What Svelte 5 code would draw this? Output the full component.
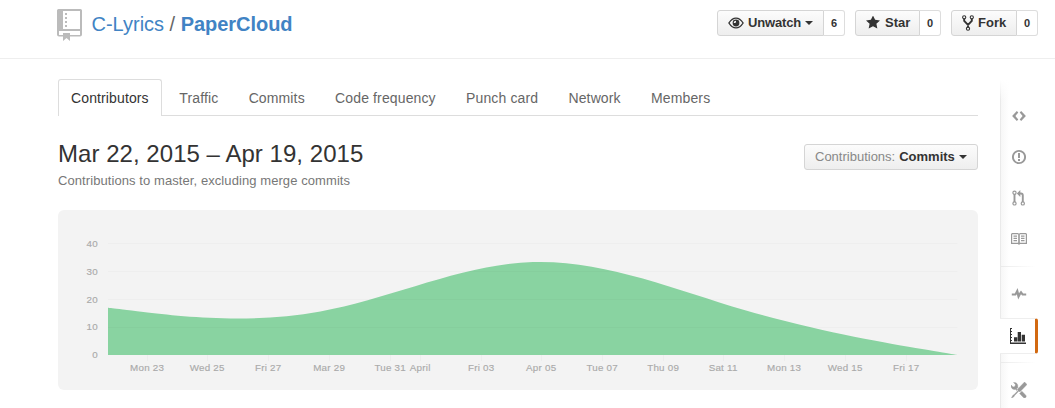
<script>
  const tabs = ['Contributors', 'Traffic', 'Commits', 'Code frequency', 'Punch card', 'Network', 'Members'];

  const weeks = [17, 8, 45, 13, 0];
  const left = 50, right = 899.5, base = 145, unit = 2.775;
  const pts = weeks.map((v, i) => [left + ((right - left) * i) / (weeks.length - 1), base - v * unit]);

  // Area outline as a uniform cubic B-spline with clamped ends
  function basis(p) {
    const mix = (a, b, wa, wb, d) => [(a[0] * wa + b[0] * wb) / d, (a[1] * wa + b[1] * wb) / d];
    const q = [p[0], p[0], ...p, p[p.length - 1], p[p.length - 1]];
    let d = `M${p[0]}`;
    for (let i = 1; i < q.length - 2; i++) {
      const c1 = mix(q[i], q[i + 1], 2, 1, 3);
      const c2 = mix(q[i], q[i + 1], 1, 2, 3);
      const e = [0, 1].map((k) => (q[i][k] + 4 * q[i + 1][k] + q[i + 2][k]) / 6);
      d += `C${c1} ${c2} ${e}`;
    }
    return `${d}L${p[p.length - 1]}L${right},${base}L${left},${base}Z`;
  }
  const area = basis(pts);

  const yTicks = [[40, 34], [30, 62], [20, 90], [10, 117], [0, 145]];
  const xTicks = [
    ['Mon 23', 89.5], ['Wed 25', 149.5], ['Fri 27', 210.5], ['Mar 29', 271.5], ['Tue 31', 332.5],
    ['April', 362.5], ['Fri 03', 423.5], ['Apr 05', 483.5], ['Tue 07', 544.5], ['Thu 09', 605.5],
    ['Sat 11', 665.5], ['Mon 13', 726.5], ['Wed 15', 787.5], ['Fri 17', 848.5]
  ];
</script>

<div class="page">
  <header>
    <div class="title">
      <svg class="repo" width="25" height="32" viewBox="0 0 25 32">
        <path fill-rule="evenodd" d="M1.5 0h22Q25 0 25 1.5v24q0 2-2 2H13V32l-3.500-3L6 32v-4.500H2q-2 0-2-2v-24Q0 0 1.500 0zM6 2v18h17V2zM2 22v4h4v-2h7v2h10v-4z" />
        <path d="M8 4h2v2H8zM8 8h2v2H8zM8 12h2v2H8zM8 16h2v2H8z" />
      </svg>
      <a class="owner">C-Lyrics</a><span class="slash">/</span><a class="name">PaperCloud</a>
    </div>
    <div class="actions">
      <div class="group">
        <span class="btn watch">
          <svg width="16" height="12" viewBox="0 0 16 12">
            <path class="line" d="M.9 6Q4 1.100 8 1.100T15.100 6Q12 10.900 8 10.900T.9 6z" stroke-width="1.400" />
            <circle cx="8" cy="6" r="3.400" /><path d="M8 3.700A2.300 2.300 0 0 0 5.700 6H7.200L8 5.200z" fill="#f5f5f5" />
          </svg>
          <b>Unwatch</b><i class="caret"></i>
        </span><span class="count">6</span>
      </div>
      <div class="group">
        <span class="btn star">
          <svg width="14" height="14" viewBox="0 1.500 14 14"><path d="M14 6l-4.900-.64L7 1 4.900 5.360 0 6l3.600 3.260L2.670 14 7 11.670 11.330 14l-.93-4.740z" /></svg>
          <b>Star</b>
        </span><span class="count">0</span>
      </div>
      <div class="group">
        <span class="btn fork">
          <svg width="12" height="16" viewBox="0 0 12 16">
            <path class="line" d="M2.200 3.800v2L6 9.800l3.800-4v-2M6 9.500v3" stroke-width="1.900" />
            <g class="line" stroke-width="1.100"><circle cx="2.200" cy="2.300" r="1.600" /><circle cx="9.800" cy="2.300" r="1.600" /><circle cx="6" cy="13.700" r="1.600" /></g>
          </svg>
          <b>Fork</b>
        </span><span class="count">0</span>
      </div>
    </div>
  </header>

  <div class="body">
    <main>
      <nav class="tabs">
        {#each tabs as tab, i}<a class:active={i === 0}>{tab}</a>{/each}
      </nav>
      <div class="heading">
        <div>
          <h1>Mar 22, 2015 – Apr 19, 2015</h1>
          <p>Contributions to master, excluding merge commits</p>
        </div>
        <span class="select"><span>Contributions:</span> <b>Commits</b><i class="caret"></i></span>
      </div>
      <svg class="chart" width="920" height="180" viewBox="0 0 920 180">
        <path d={area} fill="#89d3a1" />
        {#each yTicks as [label, y]}
          {#if label > 0}<path d="M50 {label === 10 ? 117.5 : y - 0.5}H899.500" stroke="#000" stroke-opacity=".02" />{/if}
          <text x="40" y={y + 3} text-anchor="end">{label}</text>
        {/each}
        {#each xTicks as [label, x]}
          <path d="M{x} 145v6" stroke="#000" stroke-opacity=".025" />
          <text x={x - 0.3} y="161" text-anchor="middle">{label}</text>
        {/each}
      </svg>
    </main>

    <aside>
      <div class="items first">
        <a><svg width="14" height="16" viewBox="0 0 14 16"><path d="M9.200 3L7.700 4.500 10.600 8l-2.900 3.500L9.200 13 13.900 8zM4.800 3L.1 8l4.700 5 1.500-1.500L3.400 8l2.900-3.500z" /></svg></a>
        <a><svg width="14" height="16" viewBox="0 0 14 16"><circle class="line" cx="7" cy="8" r="6.100" stroke-width="1.900" /><path d="M6 4h2v5H6zM6 10h2v2H6z" /></svg></a>
        <a><svg width="14" height="16" viewBox="0 0 14 16">
          <path class="line" d="M2.500 4v8M10.800 12V5.500Q10.800 3.500 9 3.500H8" stroke-width="1.900" />
          <path d="M8.300 0v7L4.800 3.500z" />
          <g class="line" stroke-width="1.200"><circle cx="2.500" cy="2.800" r="1.600" /><circle cx="2.500" cy="13.400" r="1.600" /><circle cx="10.800" cy="13.400" r="1.600" /></g>
        </svg></a>
        <a><svg width="16" height="12" viewBox="0 0 16 12"><path fill-rule="evenodd" d="M1 0h6l1 .7L9 0h6l1 1v10H9l-1 1-1-1H0V1zM1.200 1.200v8.600h6V1.200zM8.800 1.200v8.600h6V1.200z" /><path d="M2.500 2.500H6v1.200H2.500zM2.500 4.700H6v1.200H2.500zM2.500 7H6v1.200H2.500zM10 2.500h3.500v1.200H10zM10 4.700h3.500v1.200H10zM10 7h3.500v1.200H10z" /></svg></a>
      </div>
      <div class="items second">
        <a><svg width="16" height="12" viewBox="0 0 16 12"><path d="M.8 5.600H3.800L6.600 0 8 5.200l2-2.600 2.200 3h3v2h-4L10 6.200 7.200 11.500 5.800 6.200l-.9 1.400H.8z" /></svg></a>
        <a class="selected"><svg width="16" height="16" viewBox="0 0 16 16"><path d="M0 0h2v1H1v2h1v1H1v2h1v1H1v2h1v1H1v2h1v1H1v1.500h15V16H0zM4 9.300h3.300V13.500H4zM7.700 4H11v9.500H7.700zM11.700 6.700H15v6.800h-3.300z" /></svg></a>
      </div>
      <div class="items third">
        <a><svg width="16" height="16" viewBox="0 0 16 16"><path d="M4.480 7.270c.26.26 1.280 1.330 1.280 1.330l.56-.58-.88-.91 1.690-1.800s-.76-.74-.43-.45c.32-1.190.03-2.510-.87-3.440C4.930.5 3.660.2 2.520.51l1.930 2-.51 1.960-1.890.52-1.930-1.990C-.19 4.170.1 5.480 1 6.400c.94.98 2.290 1.260 3.480.87zm6.440 1.940l-2.330 2.300 3.840 3.980c.31.33.73.49 1.140.49.41 0 .82-.16 1.140-.49.63-.65.63-1.700 0-2.350l-3.790-3.930zM16 2.530L13.550 0 6.330 7.460l.88.91-4.310 4.460-.99.53-1.390 2.270.35.37 2.200-1.440.51-1.020L7.900 9.080l.88.91L16 2.530z" stroke="#999" stroke-width=".4" /></svg></a>
      </div>
    </aside>
  </div>
</div>

<style>
  .page { box-sizing: border-box; width: 1055px; height: 408px; overflow: hidden; background: #fff; color: #333; font-family: "Liberation Sans", Arial, sans-serif; }
  .page * { box-sizing: border-box; }
  svg { display: block; flex: none; }
  header { height: 59px; border-bottom: 1px solid #eee; padding: 9px 17px 0 57px; display: flex; justify-content: space-between; }
  .title { display: flex; font-size: 20px; line-height: 30px; color: #4183c4; white-space: nowrap; }
  .repo { fill: #bbb; margin-right: 9.500px; }
  .slash { color: #666; margin: 0 5.500px; }
  .name { font-weight: bold; letter-spacing: -.04px; }
  .actions { display: flex; gap: 10px; padding-top: 1px; }
  .group { display: flex; height: 26px; font-size: 13px; }
  .btn { display: flex; align-items: center; border: 1px solid #d5d5d5; border-radius: 3px 0 0 3px; background: linear-gradient(#fcfcfc, #eee); }
  .btn svg { fill: #333; }
  .btn b { line-height: 16px; margin-top: -1px; }
  .btn .line { fill: none; stroke: #333; }
  .watch { width: 107px; padding-left: 10px; }
  .star { width: 65px; padding-left: 10px; }
  .fork { width: 66px; padding-left: 10px; }
  .watch b { margin-left: 4px; letter-spacing: -.15px; }
  .star b { margin-left: 5px; }
  .fork b { margin-left: 4px; }
  .count { width: 21px; border: 1px solid #ddd; border-left: 0; border-radius: 0 3px 3px 0; text-align: center; font-size: 11px; font-weight: bold; line-height: 25px; }
  .caret { border: 4px solid transparent; border-top-color: #333; border-bottom: 0; margin-left: 4px; }
  .body { display: flex; gap: 22px; padding: 20px 0 0 58px; }
  main { width: 920px; }
  .tabs { display: flex; height: 37px; border-bottom: 1px solid #ddd; }
  .tabs a { font-size: 14px; line-height: 38px; color: #666; padding: 0 13px 0 17.300px; height: 37px; white-space: nowrap; letter-spacing: .13px; }
  .tabs .active { color: #333; width: 104px; padding: 0 0 0 12px; line-height: 36px; border: 1px solid #ddd; border-bottom: 0; border-radius: 3px 3px 0 0; background: #fff; letter-spacing: .12px; }
  .heading { display: flex; justify-content: space-between; height: 94px; padding-top: 22px; }
  h1 { font-size: 24px; line-height: 32px; font-weight: normal; margin: 0; letter-spacing: .04px; }
  p { font-size: 13px; line-height: 20px; margin: 1px 0 0; color: #777; letter-spacing: .08px; }
  .select { display: flex; align-items: center; margin-top: 6px; width: 174px; height: 26px; border: 1px solid #d5d5d5; border-radius: 3px; background: linear-gradient(#fcfcfc, #eee); padding: 0 0 1px 10px; font-size: 13px; white-space: nowrap; }
  .select span { color: #888; margin-right: 4px; }
  .chart { background: #f3f3f3; border-radius: 6px; }
  .chart text { font-size: 9.800px; fill: #aaa; letter-spacing: .25px; stroke: #aaa; stroke-width: .15px; }
  aside { width: 38px; margin-top: 1px; height: 340px; background: linear-gradient(#fff, transparent 20px), linear-gradient(90deg, #eaeaea 1px, #f7f7f7 1px, #fff 9px); }
  .items { display: flex; flex-direction: column; }
  .items a { display: flex; align-items: center; justify-content: center; height: 41px; width: 37px; }
  .items svg { fill: #999; }
  .items .line { fill: none; stroke: #999; }
  .first { height: 186px; padding-top: 15px; }
  .second { height: 96px; padding-top: 7px; }
  .third { padding-top: 7px; }
  .second, .third { background: linear-gradient(90deg, #eaeaea, #fff) 0 0 / 36px 1px no-repeat; }
  .items .selected { width: 38px; height: 36px; margin-top: 4px; padding: 0 0 1px 1px; background: #fff; border: 1px solid #eee; border-left: 0; border-right: 3px solid #d26911; border-radius: 0 3px 3px 0; }
  .items .selected svg { fill: #333; }
</style>
